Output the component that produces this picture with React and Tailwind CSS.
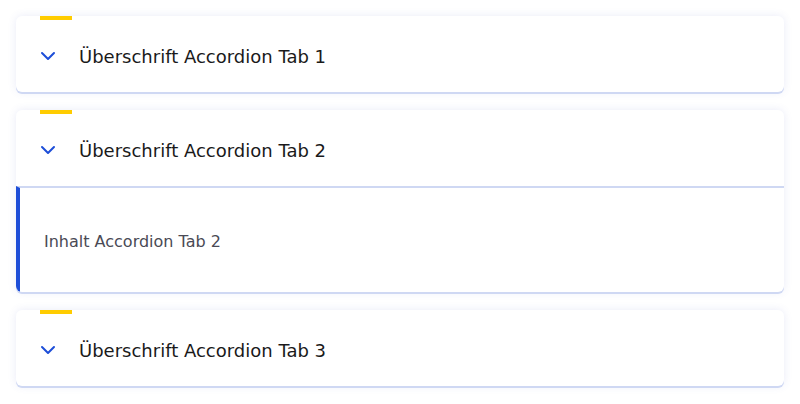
const tabs = [
  { title: "Überschrift Accordion Tab 1", open: false },
  { title: "Überschrift Accordion Tab 2", open: true, body: "Inhalt Accordion Tab 2" },
  { title: "Überschrift Accordion Tab 3", open: false },
]

function Chevron() {
  return (
    <svg width="16" height="10" viewBox="0 0 16 10" fill="none" className="shrink-0">
      <path d="M2 2l6 6 6-6" stroke="#1d4ed8" strokeWidth="2" strokeLinecap="round" strokeLinejoin="round" />
    </svg>
  )
}

export default function App() {
  return (
    <div className="min-h-[404px] bg-white px-4 pt-4 flex flex-col gap-[18px] font-['DejaVu_Sans',sans-serif]">
      {tabs.map((t) => (
        <div
          key={t.title}
          className="relative bg-white rounded-md overflow-hidden shadow-[0_2px_0_#cfd8f3,0_0_8px_rgba(70,90,200,0.12)]"
        >
          <div className="absolute left-6 top-0 w-8 h-[4px] bg-[#ffcc00]" />
          <div className="h-[76px] pt-1 flex items-center gap-[23px] pl-6">
            <Chevron />
            <span className="text-[18px] text-[#1a1a1a]">{t.title}</span>
          </div>
          {t.open && (
            <div className="border-t-2 border-[#cfd8f3] border-l-4 border-l-[#1d4ed8] h-[106px] pt-1 flex items-center pl-6">
              <span className="text-[16px] text-[#4a4a55]">{t.body}</span>
            </div>
          )}
        </div>
      ))}
    </div>
  )
}
